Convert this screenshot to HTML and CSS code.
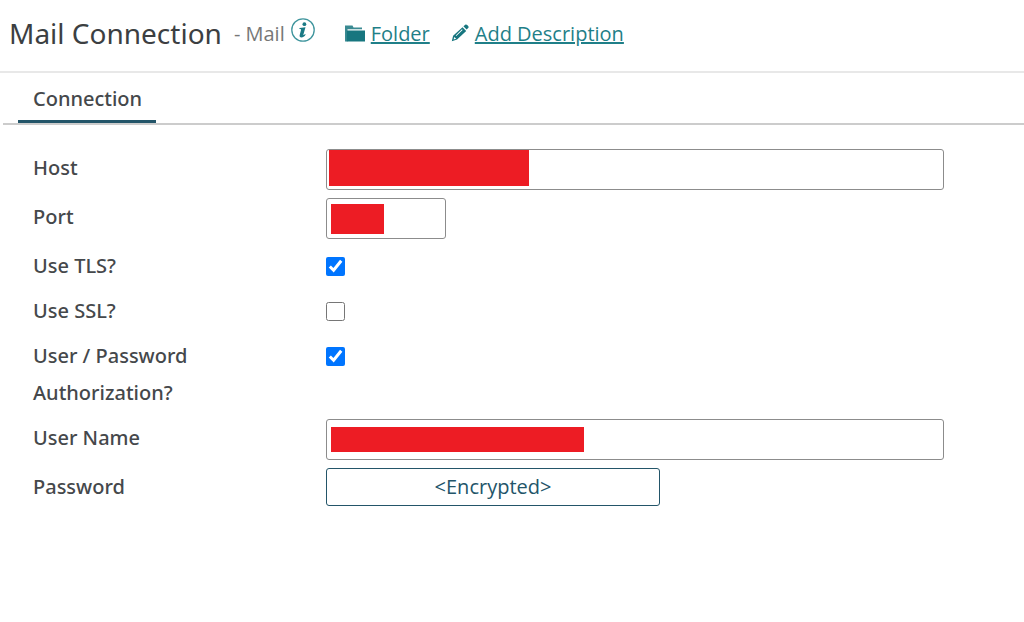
FILE: index.html
```html
<!DOCTYPE html>
<html lang="en">
<head>
    <meta charset="utf-8">
    <meta name="viewport" content="width=device-width, initial-scale=1">
    <title>Mail Connection</title>
    <link rel="stylesheet" href="styles.css">
</head>
<body>
    <header class="page-header">
        <h1>Mail Connection</h1>
        <span class="type">- Mail</span>
        <button type="button" class="info" aria-label="Information">
            <svg width="24" height="24" viewBox="0 0 24 24" fill="#1a7a85">
                <circle cx="12" cy="12" r="11.2" fill="none" stroke="#3f959d" stroke-width="1.3"/>
                <circle cx="13.4" cy="6.2" r="1.9"/>
                <path d="M8.600 9.900l5.900-.6-2.100 7.300c-.2.8.5.6 1.500-.7l.8.6c-1.400 2.200-2.800 2.900-4.200 2.900-1.600 0-2.200-1-1.800-2.500l1.300-4.900c.2-.7-.2-1-1.700-1z"/>
            </svg>
        </button>
        <a href="#" class="action folder">
            <svg width="20" height="17" viewBox="0 0 20 17" fill="#17767f">
                <path d="M0 .5h7.500l1 2H17V4.200H2.500V16.500H0z" opacity=".85"/>
                <path d="M1.800 5.500H20v11H1.800z"/>
            </svg>
            <span>Folder</span>
        </a>
        <a href="#" class="action">
            <svg width="18" height="18" viewBox="0 0 18 18" fill="#17767f">
                <path d="M12.400 2.300L14 .9c.8-.7 1.500-.6 2.200.1l.9.9c.7.7.7 1.500 0 2.200l-1.500 1.500z"/>
                <path fill-rule="evenodd" d="M11.500 3.200l3.700 3.700-9.100 8.700L.8 17.200l1.300-5.400zM3.300 12.900l-.7 2.500 2.600-.7zM11 5.300l-6.300 6.200.6.6 6.300-6.200z"/>
            </svg>
            <span>Add Description</span>
        </a>
    </header>

    <nav class="tabs">
        <a href="#connection" class="tab">Connection</a>
    </nav>

    <form class="settings" id="connection">
        <div class="row">
            <label for="host">Host</label>
            <input type="text" class="text host" id="host" name="host">
        </div>
        <div class="row">
            <label for="port">Port</label>
            <input type="text" class="text port" id="port" name="port">
        </div>
        <div class="row">
            <label for="tls">Use TLS?</label>
            <input type="checkbox" id="tls" name="tls" checked>
        </div>
        <div class="row">
            <label for="ssl">Use SSL?</label>
            <input type="checkbox" id="ssl" name="ssl">
        </div>
        <div class="row">
            <label for="auth">User / Password Authorization?</label>
            <input type="checkbox" id="auth" name="auth" checked>
        </div>
        <div class="row">
            <label for="user">User Name</label>
            <input type="text" class="text user" id="user" name="user">
        </div>
        <div class="row">
            <label for="password">Password</label>
            <button type="button" class="encrypted" id="password">&lt;Encrypted&gt;</button>
        </div>
    </form>
</body>
</html>
```
FILE: styles.css
```css
* {
    box-sizing: border-box;
}
body {
    margin: 0;
    font-family: "Open Sans", "Noto Sans", sans-serif;
    font-size: 20px;
    color: #3c3f42;
    background-color: #fff;
}
h1, label, .tab {
    font-family: "Noto Sans", "Open Sans", sans-serif;
}
.page-header {
    display: flex;
    align-items: center;
    min-height: 73px;
    padding: 0 10px 5px 9px;
    border-bottom: 2px solid #e8e8e8;
}
h1 {
    margin: 0 12px 0 0;
    font-size: 28px;
    font-weight: 400;
    color: #3c3f42;
}
.type {
    color: #777;
}
.info {
    display: flex;
    margin: 0 30px 6px 6px;
    padding: 0;
    border: none;
    background: none;
    cursor: pointer;
}
.action {
    display: flex;
    align-items: center;
    gap: 6px;
    margin-right: 21px;
    color: #1f7f88;
    text-decoration: none;
}
.action span {
    text-decoration: underline;
}
.tabs {
    display: flex;
    margin-left: 3px;
    padding-left: 15px;
    border-bottom: 2px solid #ccc;
}
.tab {
    padding: 5px 14px 0 15px;
    line-height: 42px;
    font-weight: 500;
    color: #45484b;
    text-decoration: none;
    border-bottom: 3px solid #235569;
}
.settings {
    display: flex;
    flex-direction: column;
    gap: 8px;
    padding: 24px 80px 24px 33px;
}
.row {
    display: grid;
    grid-template-columns: 180px 1fr;
    column-gap: 113px;
    align-items: start;
}
label {
    line-height: 37px;
    font-weight: 500;
    color: #45484b;
}
.text {
    width: 100%;
    height: 41px;
    padding: 0 8px;
    font: inherit;
    border: 1px solid #8c8c8c;
    border-radius: 3px;
    background: #fff linear-gradient(#ed1c24, #ed1c24) no-repeat;
}
/* masked values */
.host {
    background-size: 200px 36px;
    background-position: 2px 0;
}
.port {
    width: 120px;
    background-size: 53px 30px;
    background-position: 4px center;
}
.user {
    background-size: 253px 25px;
    background-position: 4px center;
}
input[type=checkbox] {
    width: 19px;
    height: 19px;
    margin: 10px 0 0;
}
.encrypted {
    width: 334px;
    max-width: 100%;
    height: 38px;
    padding: 0 0 2px;
    font: inherit;
    color: #235569;
    background-color: #fff;
    border: 1px solid #235569;
    border-radius: 3px;
    cursor: pointer;
}
```
